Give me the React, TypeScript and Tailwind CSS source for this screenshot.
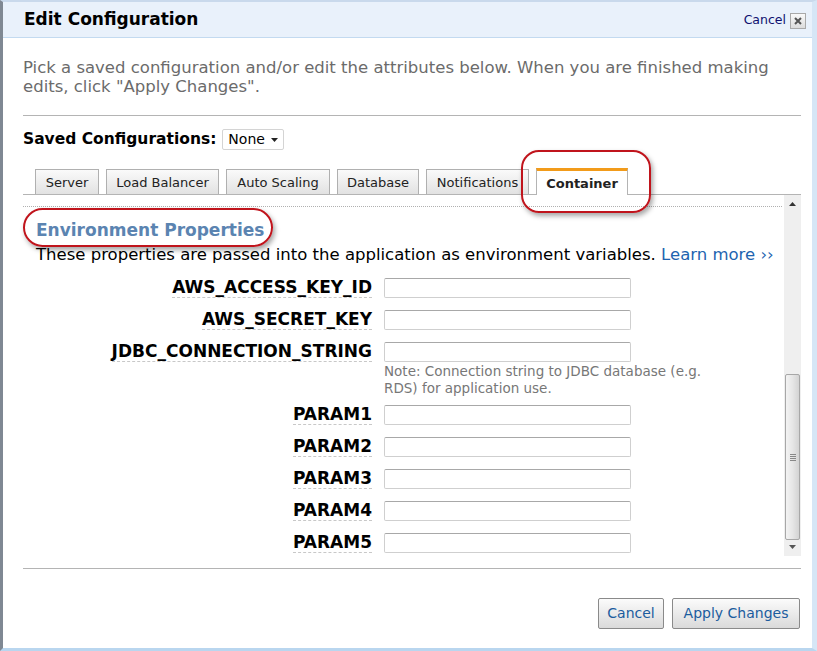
import React from "react";

const tabs = [
    { label: "Server", w: "w-[64px]" },
    { label: "Load Balancer", w: "w-[113px]" },
    { label: "Auto Scaling", w: "w-[104px]" },
    { label: "Database", w: "w-[82px]" },
    { label: "Notifications", w: "w-[103px]" },
];

const fields = [
    { name: "AWS_ACCESS_KEY_ID" },
    { name: "AWS_SECRET_KEY" },
    { name: "JDBC_CONNECTION_STRING", note: true },
    { name: "PARAM1" },
    { name: "PARAM2" },
    { name: "PARAM3" },
    { name: "PARAM4" },
    { name: "PARAM5" },
];

const FieldRow = ({ name, note }: { name: string; note?: boolean }) => {
    return (
        <div className="flex items-start">
            <div className="w-[361px] flex justify-end pr-[12px]">
                <span className="font-bold text-[17px] leading-[19px] text-black border-b border-dashed border-[#c8c8c8]">
                    {name}
                </span>
            </div>
            <div className="flex flex-col">
                <input className="w-[247px] h-[20px] border border-[#cfcfcf] border-t-[#a8a8a8] rounded-[2px] bg-white" />
                {note && (
                    <div className="text-[13.5px] leading-[17px] text-[#777] mt-[1px] mb-[-4px]">
                        Note: Connection string to JDBC database (e.g.<br />
                        RDS) for application use.
                    </div>
                )}
            </div>
        </div>
    );
};

const App = () => {
    return (
        <div
            className="relative w-[817px] h-[651px] bg-white border-l-[3px] border-l-[#7f8893] border-t-2 border-t-[#c9d9ec] border-r-[5px] border-r-[#d6e6f6] border-b-[3px] border-b-[#b9d6ef] overflow-hidden"
            style={{ fontFamily: '"DejaVu Sans", Verdana, sans-serif' }}
        >
            {/* header */}
            <div className="h-[36px] bg-[#e9f1fb] border-b border-[#c3daf0] flex items-center justify-between pl-[21px] pr-[6px]">
                <h1 className="font-bold text-[17px] text-black">Edit Configuration</h1>
                <div className="flex items-center gap-[4px] mt-[2px]">
                    <span className="text-[12.5px] text-[#101070]">Cancel</span>
                    <span className="w-[16px] h-[16px] flex items-center justify-center border border-[#a9a9a9] bg-gradient-to-b from-[#fafafa] to-[#dcdcdc]">
                        <svg width="10" height="10" viewBox="0 0 10 10">
                            <path d="M2 2 L8 8 M8 2 L2 8" stroke="#555" strokeWidth="2" />
                        </svg>
                    </span>
                </div>
            </div>

            <div className="pl-[20px] pr-[11px]">
                <p className="mt-[20px] text-[16.5px] leading-[19px] text-[#6b6b6b] whitespace-nowrap">
                    Pick a saved configuration and/or edit the attributes below. When you are finished making
                    <br />
                    edits, click "Apply Changes".
                </p>

                <div className="mt-[19px] border-t border-[#b4b4b4]" />

                <div className="mt-[12px] flex items-center gap-[6px]">
                    <span className="font-bold text-[15.5px] text-black">Saved Configurations:</span>
                    <div className="w-[62px] h-[21px] px-[5px] flex items-center justify-between border border-[#d4d4d4] rounded-[2px] text-[14px] text-black">
                        None
                        <svg width="7" height="4" viewBox="0 0 7 4">
                            <path d="M0 0 L7 0 L3.5 4 Z" fill="#222" />
                        </svg>
                    </div>
                </div>

                {/* tabs */}
                <div className="mt-[17px] flex items-end gap-[7px] pl-[12px] border-b border-[#b4b4b4] h-[27px]">
                    {tabs.map((t) => (
                        <div
                            key={t.label}
                            className={`${t.w} h-[25px] flex items-center justify-center text-[13px] text-[#222] border border-b-0 border-[#b0b0b0] bg-gradient-to-b from-[#fafafa] to-[#e2e2e2]`}
                        >
                            {t.label}
                        </div>
                    ))}
                    <div className="w-[92px] h-[27px] mb-[-1px] flex items-center justify-center font-bold text-[13px] text-[#222] bg-white border-t-[3px] border-t-[#f29b1a] border-x border-x-[#b4b4b4]">
                        Container
                    </div>
                </div>

                {/* scrolled panel */}
                <div className="flex h-[361px]">
                    <div className="flex-1 overflow-hidden">
                        <div className="mt-[11px] border-t border-dotted border-[#b0b0b0] mr-[2px]" />
                        <h2 className="mt-[12px] ml-[13px] font-bold text-[17px] leading-[22px] text-[#5b84b1]">Environment Properties</h2>
                        <p className="ml-[13px] mt-[4px] text-[16.5px] leading-[20px] text-black whitespace-nowrap">
                            These properties are passed into the application as environment variables.{" "}
                            <span className="text-[#1e64b0]">Learn more ››</span>
                        </p>
                        <div className="mt-[13px] flex flex-col gap-[12px]">
                            {fields.map((f) => (
                                <FieldRow key={f.name} name={f.name} note={f.note} />
                            ))}
                        </div>
                    </div>
                    {/* scrollbar */}
                    <div className="w-[17px] bg-[#efefef] flex flex-col items-center pt-[7px] pb-[2px]">
                        <svg width="7" height="4" viewBox="0 0 7 4">
                            <path d="M0 4 L7 4 L3.5 0 Z" fill="#333" />
                        </svg>
                        <div className="flex-1" />
                        <div className="w-[15px] h-[166px] border border-[#a7a7a7] rounded-[2px] bg-gradient-to-r from-[#f3f3f3] via-[#e6e6e6] to-[#d3d3d3] flex items-center justify-center">
                            <svg width="6" height="7" viewBox="0 0 6 7">
                                <path d="M0 0.5 H6 M0 2.5 H6 M0 4.5 H6 M0 6.5 H6" stroke="#888" strokeWidth="1" />
                            </svg>
                        </div>
                        <div className="h-[14px] flex items-center">
                            <svg width="7" height="4" viewBox="0 0 7 4">
                                <path d="M0 0 L7 0 L3.5 4 Z" fill="#555" />
                            </svg>
                        </div>
                    </div>
                </div>

                <div className="mt-[12px] border-t border-[#b4b4b4]" />

                <div className="mt-[29px] flex justify-end gap-[8px] pr-[1px]">
                    <button className="w-[66px] h-[31px] text-[14px] text-[#1b5c9e] border border-[#8a8a8a] rounded-[2px] bg-gradient-to-b from-[#fbfbfb] to-[#dadada]">
                        Cancel
                    </button>
                    <button className="w-[128px] h-[31px] text-[14px] text-[#1b5c9e] border border-[#8a8a8a] rounded-[2px] bg-gradient-to-b from-[#fbfbfb] to-[#dadada]">
                        Apply Changes
                    </button>
                </div>
            </div>

            {/* red annotation marks */}
            <div className="absolute left-[518px] top-[148px] w-[130px] h-[63px] rounded-[18px] border-2 border-[#c0141c] shadow-[2px_3px_5px_rgba(0,0,0,0.35)]" />
            <div className="absolute left-[20px] top-[206px] w-[250px] h-[39px] rounded-[20px] border-2 border-[#c0141c] shadow-[2px_3px_5px_rgba(0,0,0,0.35)]" />
        </div>
    );
};

export default App;
